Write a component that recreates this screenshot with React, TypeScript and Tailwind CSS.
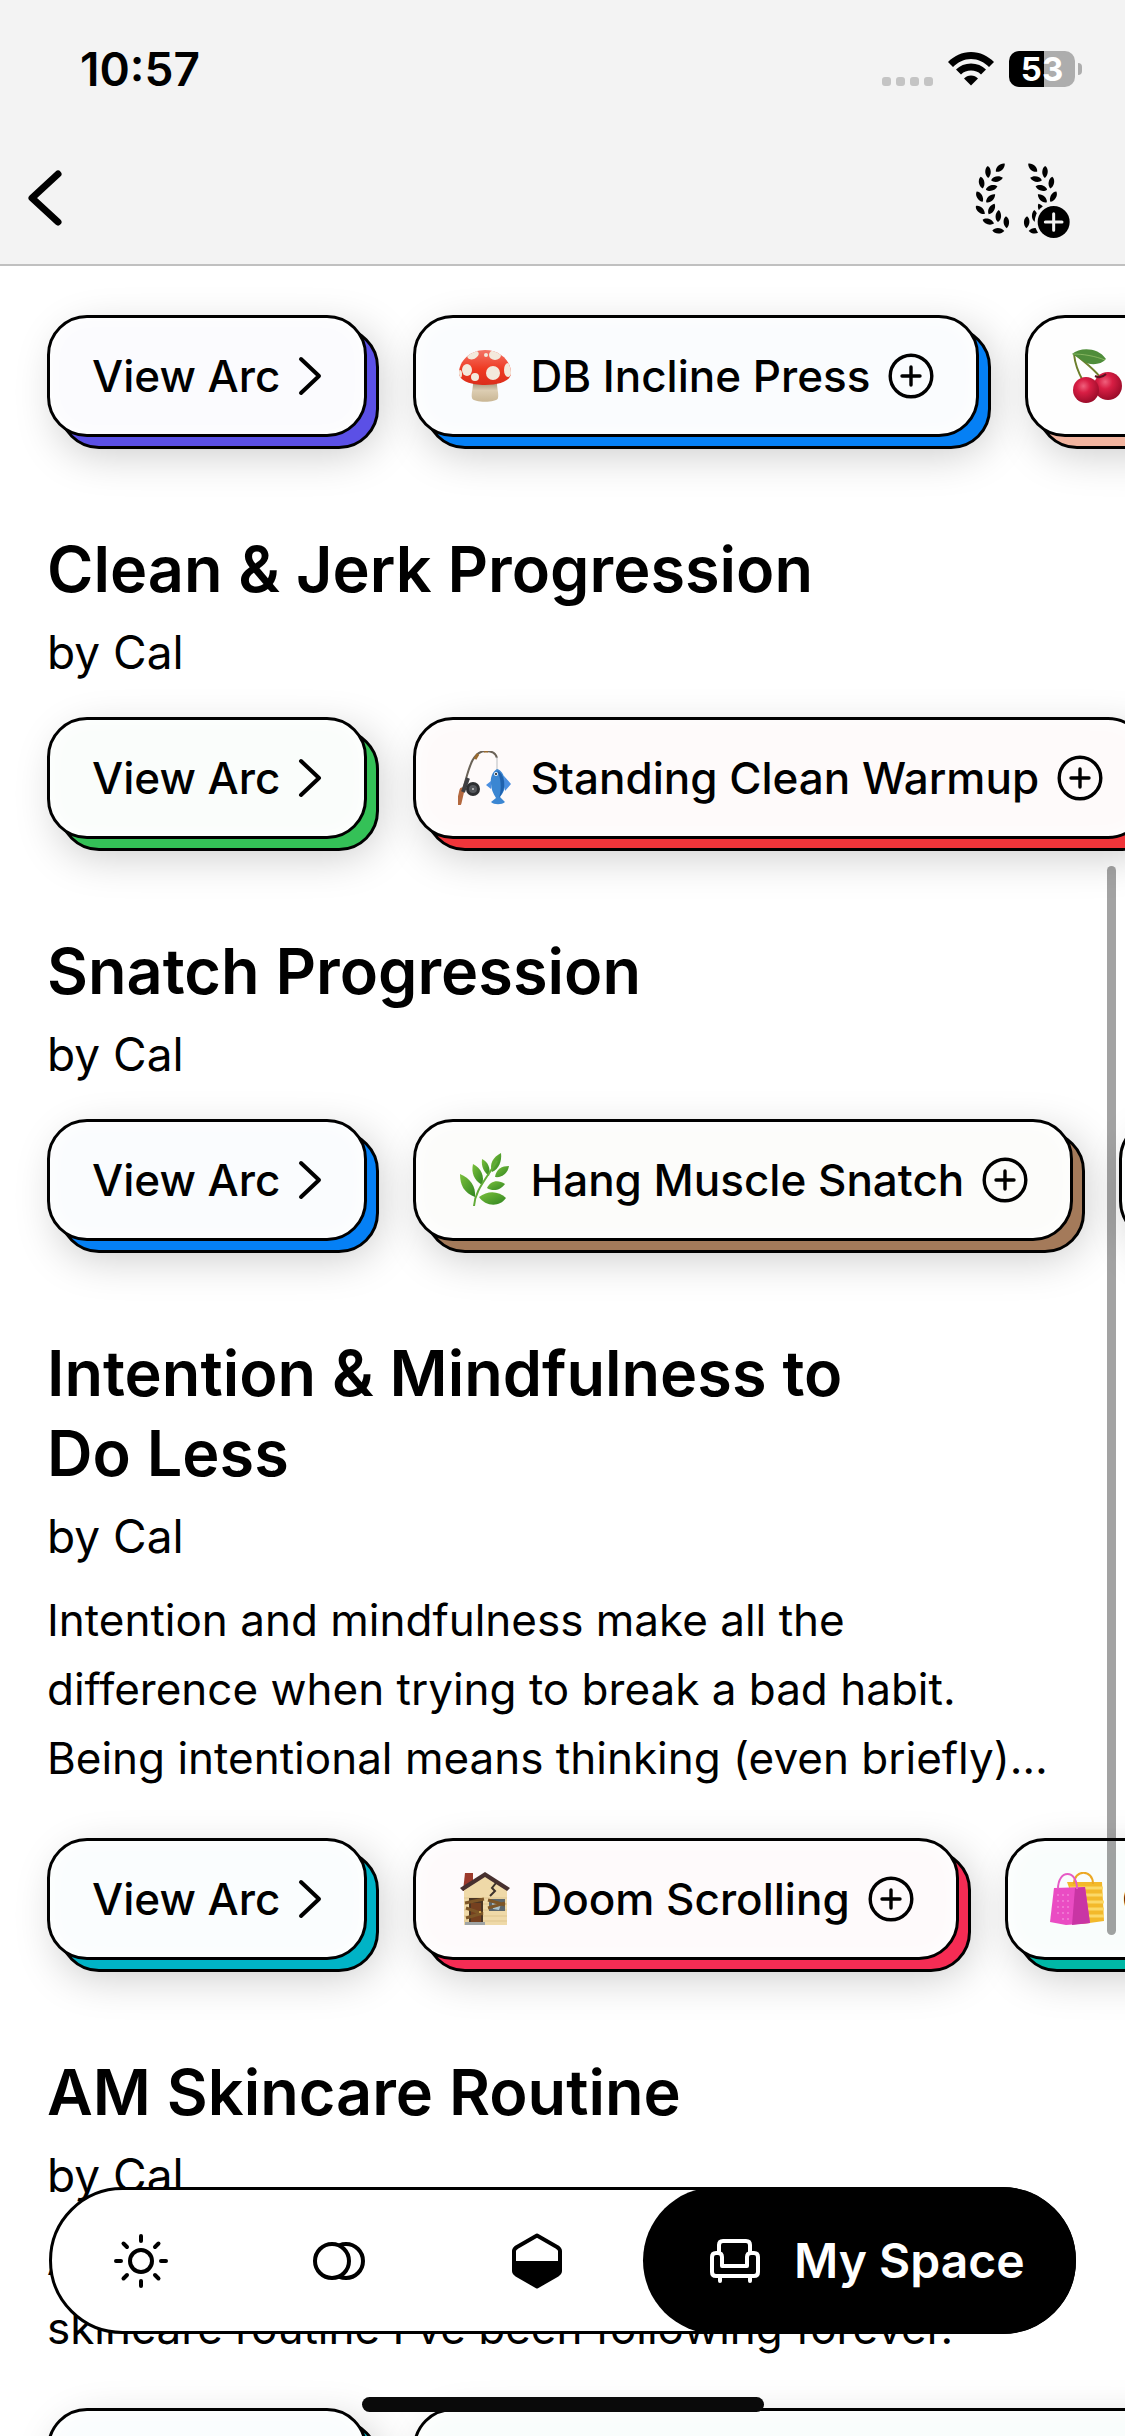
import type { ReactNode } from "react";
import clsx from "clsx";

interface ChipTypes {
  label: string;
  icon?: ReactNode;
  color: string;
  tint: string;
}

interface ArcTypes {
  title?: string;
  author?: string;
  description?: string;
  color: string;
  tint: string;
  chips: ChipTypes[];
}

const Mushroom = () => (
  <svg viewBox="0 0 54 54" className="size-[54px] shrink-0" aria-hidden="true">
    <defs>
      <linearGradient id="cap" x1="0" y1="0" x2="0" y2="1">
        <stop offset="0" stopColor="#f4776a" />
        <stop offset="0.5" stopColor="#ee3a22" />
        <stop offset="1" stopColor="#d62a18" />
      </linearGradient>
      <linearGradient id="stem" x1="0" y1="0" x2="0" y2="1">
        <stop offset="0" stopColor="#a8977c" />
        <stop offset="0.4" stopColor="#dccdb2" />
        <stop offset="1" stopColor="#c9b694" />
      </linearGradient>
      <clipPath id="capClip">
        <path d="M27 1C12 1 1 12 1 24c0 8 12 12 26 12s26-4 26-12C53 12 42 1 27 1z" />
      </clipPath>
    </defs>
    <path d="M15 34c0 6-2 11-1 15 1 5 25 5 26 0 1-4-1-9-1-15z" fill="url(#stem)" />
    <g clipPath="url(#capClip)">
      <rect width="54" height="40" fill="url(#cap)" />
      <g fill="#f3e9dc">
        <ellipse cx="15" cy="6" rx="6" ry="4" transform="rotate(-25 15 6)" />
        <ellipse cx="37" cy="6" rx="6" ry="5" />
        <circle cx="28" cy="6" r="2" />
        <ellipse cx="9" cy="21" rx="5" ry="6" />
        <ellipse cx="35" cy="24" rx="7" ry="7" />
        <ellipse cx="17" cy="28" rx="4" ry="4" />
        <ellipse cx="50" cy="21" rx="4" ry="7" />
        <ellipse cx="2" cy="25" rx="2" ry="4" />
      </g>
    </g>
  </svg>
);

const Cherries = () => (
  <svg viewBox="0 0 54 54" className="size-[54px] shrink-0" aria-hidden="true">
    <defs>
      <radialGradient id="cherry" cx="0.4" cy="0.35" r="0.65">
        <stop offset="0" stopColor="#f0607c" />
        <stop offset="0.4" stopColor="#d81e44" />
        <stop offset="1" stopColor="#9c0c2a" />
      </radialGradient>
    </defs>
    <path d="M4 5c1 10 4 18 9 27M5 5c9 8 18 14 25 23" fill="none" stroke="#6d7f2c" strokeWidth="2" />
    <path d="M2 5C10-2 28-2 36 10c-5 6-16 7-23 2C9 9 6 7 2 5z" fill="#4f8d3a" />
    <path d="M3 5c10 0 22 2 32 6" fill="none" stroke="#87b560" />
    <circle cx="38" cy="37" r="14" fill="url(#cherry)" />
    <circle cx="16" cy="41" r="13" fill="url(#cherry)" />
    <path d="M25 27c4 2 8 1 11-2" fill="none" stroke="#5b1220" strokeWidth="2" />
  </svg>
);

const FishingPole = () => (
  <svg viewBox="0 0 54 54" className="size-[54px] shrink-0" aria-hidden="true">
    <path d="M3 45C10 24 12 0 28 0c7 0 10 3 11 7" fill="none" stroke="#6b6358" strokeWidth="2" />
    <path d="M39 6v13" stroke="#b9bcc0" />
    <path d="M17 8l3-5M26 0h4" stroke="#9a6a2e" strokeWidth="3" />
    <path d="M4 39L1 52" stroke="#b3683f" strokeWidth="5" strokeLinecap="round" />
    <path d="M10 27L5 41" stroke="#3f3f42" strokeWidth="4" />
    <circle cx="15" cy="38" r="7" fill="#2d2e31" />
    <circle cx="15" cy="38" r="4" fill="#55575c" />
    <circle cx="15" cy="38" r="1" fill="#c9c9c9" />
    <path d="M39 18c-5 3-7 9-6 15 0 5 2 9 5 14l-5 4c3 3 11 3 14 0l-5-5c4-5 6-10 5-16-1-7-4-11-8-12z" fill="#3b86d2" />
    <path d="M39 20c4 6 5 18 2 27 4-5 6-11 5-17-1-5-3-9-7-10z" fill="#1f61ad" />
    <path d="M46 25l7 8-6 7zM33 30l-5 4 5 4z" fill="#4a8ee0" />
    <circle cx="38" cy="23" r="2" fill="#e9f3fb" />
    <circle cx="38" cy="23" r="1" fill="#111" />
  </svg>
);

const Herb = () => (
  <svg viewBox="0 0 54 54" className="size-[54px] shrink-0" aria-hidden="true">
    <defs>
      <linearGradient id="leaf" x1="0" y1="0" x2="1" y2="1">
        <stop offset="0" stopColor="#7cc13c" />
        <stop offset="1" stopColor="#2f8420" />
      </linearGradient>
    </defs>
    <g fill="url(#leaf)">
      <path d="M43 0c-8 4-12 11-9 19 7-3 10-11 9-19z" />
      <path d="M24 6c-1 8 2 13 7 17 2-8-1-14-7-17z" />
      <path d="M51 13c-7 0-13 3-14 11 7 1 13-4 14-11z" />
      <path d="M15 11c-2 9 1 16 9 21 3-9-1-17-9-21z" />
      <path d="M47 31c-7-5-15-3-18 4 6 4 14 2 18-4z" />
      <path d="M2 21c0 11 4 19 15 23 1-11-5-19-15-23z" />
      <path d="M48 45c-7-7-18-8-27-1 6 9 20 11 27 1z" />
    </g>
    <path d="M16 53c1-15 10-24 23-45" fill="none" stroke="#62ab37" strokeWidth="2" />
  </svg>
);

const House = () => (
  <svg viewBox="0 0 54 54" className="size-[54px] shrink-0" aria-hidden="true">
    <path d="M7 1h8v18H5z" fill="#9c3a2c" />
    <path d="M27 3L6 18v35h43V18z" fill="#efd9a8" />
    <path d="M6 26h43M6 32h43M6 38h43M6 44h43M6 49h43" stroke="#dfc58e" />
    <path d="M27 0L2 16l3 3L27 5l22 14 3-3z" fill="#47302f" />
    <path d="M38 11l-4 5 3 3-5 5" fill="none" stroke="#3e332c" strokeWidth="2" />
    <path d="M11 26h14v25H11z" fill="#4b3523" />
    <path d="M13 31h10v19H13z" fill="#75401f" />
    <path d="M31 27h16v12H31z" fill="#5c666b" />
    <path d="M34 31l9 1-2 6-6-1z" fill="#a9c3cf" />
    <path d="M7 31l19-4M8 36l17 6M8 46l17-5M30 28l17 5M30 36l17-5" stroke="#7d5627" strokeWidth="3" />
    <circle cx="22" cy="40" r="1" fill="#e5c15d" />
    <path d="M7 50h20v3H7z" fill="#9fa3a3" />
  </svg>
);

const Bags = () => (
  <svg viewBox="0 0 54 54" className="size-[54px] shrink-0" aria-hidden="true">
    <path d="M17 10h35l2 39-22 3z" fill="#f3b92b" />
    <path d="M20 16h33M20 23h33M20 30h34M22 37h32M24 44h30" stroke="#fbd968" strokeWidth="3" />
    <path d="M24 12C24-3 43-3 43 12" fill="none" stroke="#eca824" strokeWidth="2" />
    <path d="M4 16l31-1 5 36-24 2-16-3z" fill="#ea4cc3" />
    <path d="M25 16l-3 37 18-2-5-36z" fill="#c935a4" />
    <path d="M8 22v24M13 22v26M18 22v27" stroke="#f59be0" strokeWidth="1" strokeDasharray="2 4" />
    <path d="M8 17C8-3 27-3 27 17" fill="none" stroke="#e65bc5" strokeWidth="2" />
  </svg>
);

const ChevronIcon = () => (
  <svg viewBox="0 0 24 40" className="h-[40px] w-[24px] shrink-0" aria-hidden="true">
    <path d="M3 3l18 17L3 37" fill="none" stroke="#000" strokeWidth="4" strokeLinecap="round" strokeLinejoin="round" />
  </svg>
);

const PlusCircleIcon = () => (
  <svg viewBox="0 0 46 46" className="size-[46px] shrink-0" aria-hidden="true">
    <circle cx="23" cy="23" r="20.8" fill="none" stroke="#000" strokeWidth="3.4" />
    <path d="M23 14v18M14 23h18" stroke="#000" strokeWidth="3.4" strokeLinecap="round" />
  </svg>
);

const LEAVES = [
  [79, 17, -42],
  [42, 30, 88],
  [69, 51, -12],
  [23, 62, 80],
  [53, 78, -16],
  [17, 104, 60],
  [50, 109, -42],
  [19, 144, 42],
  [53, 141, -60],
  [73, 162, -86],
  [43, 179, 18],
  [97, 181, 86],
  [73, 206, 2],
];

const LaurelHalf = () => (
  <>
    {LEAVES.map(([x, y, angle]) => (
      <path
        key={`${x}-${y}`}
        d="M-18 0C-11-11 9-11 18 0C9 11-11 11-18 0z"
        transform={`translate(${x} ${y}) rotate(${angle})`}
      />
    ))}
  </>
);

const LaurelIcon = () => (
  <svg viewBox="0 0 291 234" className="h-[78px] w-[97px]" aria-hidden="true">
    <LaurelHalf />
    <g transform="translate(255 0) scale(-1 1)">
      <LaurelHalf />
    </g>
    <circle cx="239" cy="180" r="57" fill="#f3f3f3" />
    <circle cx="239" cy="180" r="48" />
    <path d="M239 155v50M214 180h50" stroke="#f3f3f3" strokeWidth="9" strokeLinecap="round" />
  </svg>
);

const WifiIcon = () => (
  <svg viewBox="0 0 46 34" className="h-[34px] w-[46px]" aria-hidden="true">
    <path d="M23 0C14 0 6 4 0 10l5 5c5-5 11-8 18-8s13 3 18 8l5-5C40 4 32 0 23 0z" />
    <path d="M23 11.500c-6 0-11 2-15 6l5 5c3-3 6-4 10-4s7 1 10 4l5-5c-4-4-9-6-15-6z" />
    <path d="M23 23.500c-3 0-5 1-7 3l7 7 7-7c-2-2-4-3-7-3z" />
  </svg>
);

const SunIcon = () => (
  <svg viewBox="0 0 56 56" className="size-[56px]" aria-hidden="true">
    <g fill="none" stroke="#000" strokeWidth="4" strokeLinecap="round">
      <circle cx="28" cy="28" r="11" />
      <path d="M28 3v5M28 48v5M3 28h5M48 28h5M10.500 10.500l3.500 3.500M42 42l3.500 3.500M10.500 45.500l3.500-3.500M42 14l3.500-3.500" />
    </g>
  </svg>
);

const MoonsIcon = () => (
  <svg viewBox="0 0 56 56" className="size-[56px]" aria-hidden="true">
    <g stroke="#000" strokeWidth="4">
      <circle cx="35" cy="28" r="17" fill="none" />
      <circle cx="21" cy="28" r="17" fill="#fff" />
    </g>
  </svg>
);

const HexagonIcon = () => (
  <svg viewBox="0 0 56 56" className="size-[56px]" aria-hidden="true">
    <path d="M28 2.500l20 11.500q3 2 3 4v20q0 2-3 4L28 53.500 8 42q-3-2-3-4V18q0-2 3-4z" fill="none" stroke="#000" strokeWidth="4" strokeLinejoin="round" />
    <path d="M5 28h46v11L28 53.500 5 39z" />
  </svg>
);

const ArmchairIcon = () => (
  <svg viewBox="0 0 50 44" className="h-[44px] w-[50px] shrink-0" aria-hidden="true">
    <g fill="none" stroke="#fff" strokeWidth="4" strokeLinejoin="round" strokeLinecap="round">
      <path d="M9 13V6q0-4 4-4h23q4 0 4 4v7" />
      <path d="M12 27h25V18q0-4 4-4h3q4 0 4 4v15q0 4-4 4H6q-4 0-4-4V18q0-4 4-4h2q4 0 4 4z" />
      <path d="M10 38v4M40 38v4" />
    </g>
  </svg>
);

const Chip = ({ label, icon, color, tint }: ChipTypes) => (
  <button type="button" className="relative shrink-0">
    <span
      className={clsx(
        "absolute inset-0 translate-3 rounded-[40px] border-3 border-black shadow-[0_4px_44px_rgba(0,0,0,0.22)]",
        color,
      )}
    />
    <span
      className={clsx(
        "relative flex h-[122px] items-center gap-[18px] rounded-[40px] border-3 border-black px-[42px] text-[44px] font-medium whitespace-nowrap shadow-[inset_0_0_22px_#fff]",
        tint,
      )}
    >
      {icon}
      {label}
      {icon ? <PlusCircleIcon /> : <ChevronIcon />}
    </span>
  </button>
);

const ArcSection = ({ title, author, description, color, tint, chips }: ArcTypes) => (
  <section className="mb-[92px] pl-[47px]">
    {title && (
      <h2 className="max-w-[880px] text-[63px] leading-[80px] font-semibold">{title}</h2>
    )}
    {author && (
      <p className="mt-[15px] text-[46px] leading-[56px]">by {author}</p>
    )}
    {description && (
      <p className="mt-[22px] mb-[45px] text-[44px] leading-[69px] whitespace-pre-line">
        {description}
      </p>
    )}
    <div className={clsx("flex gap-[46px]", title && !description && "mt-[37px]")}>
      <Chip label="View Arc" color={color} tint={tint} />
      {chips.map((chip) => (
        <Chip key={chip.label} {...chip} />
      ))}
    </div>
  </section>
);

const ARCS: ArcTypes[] = [
  {
    color: "bg-[#5b50e6]",
    tint: "bg-[#fbfbfe]",
    chips: [
      { label: "DB Incline Press", icon: <Mushroom />, color: "bg-[#0580f5]", tint: "bg-[#fafcfe]" },
      { label: "Cherry Picks", icon: <Cherries />, color: "bg-[#f2b49f]", tint: "bg-[#fefefe]" },
    ],
  },
  {
    title: "Clean & Jerk Progression",
    author: "Cal",
    color: "bg-[#34c157]",
    tint: "bg-[#fafdfb]",
    chips: [
      { label: "Standing Clean Warmup", icon: <FishingPole />, color: "bg-[#f0353a]", tint: "bg-[#fefafa]" },
    ],
  },
  {
    title: "Snatch Progression",
    author: "Cal",
    color: "bg-[#0580f5]",
    tint: "bg-[#fafcfe]",
    chips: [
      { label: "Hang Muscle Snatch", icon: <Herb />, color: "bg-[#a47a5a]", tint: "bg-[#fcfcfa]" },
      { label: "Power Snatch", icon: <Herb />, color: "bg-[#34c157]", tint: "bg-[#fafdfb]" },
    ],
  },
  {
    title: "Intention & Mindfulness to Do Less",
    author: "Cal",
    description:
      "Intention and mindfulness make all the\ndifference when trying to break a bad habit.\nBeing intentional means thinking (even briefly)…",
    color: "bg-[#00b3c6]",
    tint: "bg-[#fafdfe]",
    chips: [
      { label: "Doom Scrolling", icon: <House />, color: "bg-[#f52c54]", tint: "bg-[#fefafb]" },
      { label: "Online Shopping", icon: <Bags />, color: "bg-[#00b8a6]", tint: "bg-[#f9fdfc]" },
    ],
  },
  {
    title: "AM Skincare Routine",
    author: "Cal",
    description:
      "A basic but effective morning\nskincare routine I’ve been following forever.",
    color: "bg-[#00b3c6]",
    tint: "bg-[#fafdfe]",
    chips: [
      { label: "Morning Skincare Routine", icon: <Herb />, color: "bg-[#00b8a6]", tint: "bg-[#f9fdfc]" },
    ],
  },
];

const StatusBar = () => (
  <div className="flex h-[138px] items-center justify-between pr-[43px] pl-[80px]">
    <time className="text-[46px] font-semibold">10:57</time>
    <div className="flex items-center">
      <div className="mt-6 mr-[15px] flex gap-[5px]">
        <span className="size-[9px] rounded-[3px] bg-[#c4c4c4]" />
        <span className="size-[9px] rounded-[3px] bg-[#c4c4c4]" />
        <span className="size-[9px] rounded-[3px] bg-[#c4c4c4]" />
        <span className="size-[9px] rounded-[3px] bg-[#c4c4c4]" />
      </div>
      <WifiIcon />
      <div className="ml-[15px] flex h-[36px] w-[66px] items-center justify-center rounded-[10px] bg-linear-to-r from-black from-53% to-[#adadad] to-53% text-[33px] leading-[36px] font-bold text-white">
        53
      </div>
      <span className="ml-[3px] h-[12px] w-[4px] rounded-r-full bg-[#adadad]" />
    </div>
  </div>
);

const TabBar = () => (
  <nav className="absolute inset-x-[49px] bottom-[102px] flex h-[147px] rounded-full border-3 border-black bg-white">
    <div className="flex flex-1 items-center gap-[142px] pl-[61px]">
      <button type="button" aria-label="Today">
        <SunIcon />
      </button>
      <button type="button" aria-label="Reflect">
        <MoonsIcon />
      </button>
      <button type="button" aria-label="Progress">
        <HexagonIcon />
      </button>
    </div>
    <button
      type="button"
      className="-m-[3px] flex w-[433px] items-center gap-[34px] rounded-full bg-black pl-[67px] text-[48px] font-semibold text-white"
    >
      <ArmchairIcon />
      My Space
    </button>
  </nav>
);

export default function App() {
  return (
    <div className="relative flex h-screen flex-col overflow-hidden bg-white font-['Inter',sans-serif] text-black">
      <header className="shrink-0 border-b-2 border-[#c0c0c0] bg-[#f3f3f3]">
        <StatusBar />
        <div className="flex h-[126px] items-start justify-between pt-[24px] pr-[54px] pl-[26px]">
          <button type="button" aria-label="Back" className="pt-[6px]">
            <svg viewBox="0 0 38 60" className="h-[60px] w-[38px]" aria-hidden="true">
              <path d="M32 6L6 30l26 24" fill="none" stroke="#000" strokeWidth="7" strokeLinecap="round" strokeLinejoin="round" />
            </svg>
          </button>
          <button type="button" aria-label="Add arc">
            <LaurelIcon />
          </button>
        </div>
      </header>
      <main className="min-h-0 flex-1 overflow-hidden pt-[49px]">
        {ARCS.map((arc, index) => (
          <ArcSection key={index} {...arc} />
        ))}
      </main>
      <div className="absolute top-[866px] right-[9px] h-[1069px] w-[9px] rounded-full bg-black/36" />
      <TabBar />
      <div className="absolute bottom-[24px] left-1/2 h-[15px] w-[402px] -translate-x-1/2 rounded-full bg-[#0a0a0a]" />
    </div>
  );
}
